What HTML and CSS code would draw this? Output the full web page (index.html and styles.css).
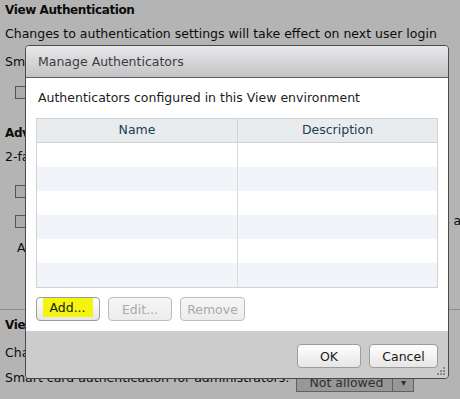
FILE: index.html
```html
<!DOCTYPE html>
<html lang="en">
<head>
    <meta charset="UTF-8">
    <title>Manage Authenticators</title>
    <link rel="stylesheet" href="styles.css">
</head>
<body>
    <div class="page">
        <h2 class="section-title">View Authentication</h2>
        <p class="line line-note">Changes to authentication settings will take effect on next user login</p>
        <p class="line line-field">Smart card authentication for users:</p>
        <div class="check check-first"><span class="box"></span>Disconnect user sessions on smart card removal</div>

        <h2 class="section-title section-adv">Advanced Authentication</h2>
        <p class="line line-twofa">2-factor authentication: RSA SecurID</p>
        <div class="check check-second"><span class="box"></span>Enforce SecurID and Windows user name matching</div>
        <div class="check check-third"><span class="box"></span>Use the same user name and password for both RSA and Windows authentication</div>
        <p class="line line-indent">Authenticators: None configured</p>

        <hr class="divider">

        <h2 class="section-title section-admin">View Administrator Authentication</h2>
        <p class="line line-note-admin">Changes to authentication settings will take effect on next user login</p>
        <div class="select-row">
            <span class="select-label">Smart card authentication for administrators:</span>
            <span class="select">
                <span class="select-value">Not allowed</span>
                <span class="select-arrow">&#9662;</span>
            </span>
        </div>
    </div>

    <!-- modal mask over the page -->
    <div class="mask"></div>

    <div class="dialog">
        <div class="dialog-title">Manage Authenticators</div>
        <div class="dialog-body">
            <p class="dialog-intro">Authenticators configured in this View environment</p>
            <table class="grid">
                <thead>
                    <tr><th class="col-name">Name</th><th class="col-desc">Description</th></tr>
                </thead>
                <tbody>
                    <tr><td></td><td></td></tr>
                    <tr class="alt"><td></td><td></td></tr>
                    <tr><td></td><td></td></tr>
                    <tr class="alt"><td></td><td></td></tr>
                    <tr><td></td><td></td></tr>
                    <tr class="alt"><td></td><td></td></tr>
                </tbody>
            </table>
            <div class="grid-actions">
                <button class="btn btn-add"><span class="marker">Add...</span></button>
                <button class="btn btn-edit" disabled>Edit...</button>
                <button class="btn btn-remove" disabled>Remove</button>
            </div>
        </div>
        <div class="dialog-footer">
            <button class="btn btn-ok">OK</button>
            <button class="btn btn-cancel">Cancel</button>
            <svg class="grip" width="10" height="11" viewBox="0 0 10 11">
                <rect x="7" y="1" width="2" height="2" fill="#8a8a8a"/>
                <rect x="4" y="4" width="2" height="2" fill="#8a8a8a"/>
                <rect x="7" y="4" width="2" height="2" fill="#8a8a8a"/>
                <rect x="1" y="7" width="2" height="2" fill="#8a8a8a"/>
                <rect x="4" y="7" width="2" height="2" fill="#8a8a8a"/>
                <rect x="7" y="7" width="2" height="2" fill="#8a8a8a"/>
            </svg>
        </div>
    </div>
</body>
</html>
```

FILE: styles.css
```css
body {
    margin: 0;
    background-color: #fff;
    font-family: 'DejaVu Sans', sans-serif;
    font-size: 12.5px;
    line-height: 16px;
    color: #111;
    overflow: hidden;
    width: 460px;
    height: 399px;
    position: relative;
}
.page {
    padding: 2px 0 0 5px;
    white-space: nowrap;
    overflow: hidden;
}
.section-title {
    margin: 0;
    font-size: 12px;
    letter-spacing: -0.4px;
    font-weight: bold;
    line-height: 16px;
}
.line {
    margin: 0;
}
.line-note {
    margin-top: 8px;
}
.line-field {
    margin-top: 12px;
}
.check {
    display: flex;
    align-items: center;
    height: 16px;
    padding-left: 10px;
}
.box {
    flex-shrink: 0;
    width: 11px;
    height: 11px;
    border: 1px solid #777;
    background-color: #f4f4f4;
    margin-right: 4px;
}
.check-first {
    margin-top: 14px;
}
.section-adv {
    margin-top: 25px;
}
.line-twofa {
    margin-top: 8px;
}
.check-second {
    margin-top: 18px;
}
.check-third {
    margin-top: 14px;
}
.line-indent {
    margin-top: 11px;
    padding-left: 12px;
}
.divider {
    margin: 53px 0 0 -5px;
    border: none;
    border-top: 1px solid #c8c8c8;
    height: 0;
}
.section-admin {
    margin-top: 7px;
}
.line-note-admin {
    margin-top: 12px;
}
.select-row {
    display: flex;
    align-items: flex-start;
    margin-top: 7px;
}
.select-label {
    padding-top: 2px;
}
.select {
    display: flex;
    height: 22px;
    margin-left: 7px;
    border: 1px solid #8a8a8a;
    background-color: #d6d6d6;
    color: #444;
}
.select-value {
    width: 83px;
    padding: 6px 0 0 12px;
}
.select-arrow {
    width: 20px;
    border-left: 1px solid #8a8a8a;
    text-align: center;
    padding-top: 6px;
    font-size: 10px;
}

.mask {
    position: absolute;
    inset: 0;
    background-color: rgba(0, 0, 0, 0.294);
}

.dialog {
    position: absolute;
    left: 25px;
    top: 45px;
    width: 424px;
    height: 334px;
    box-sizing: border-box;
    border: 1px solid #4a4a4a;
    border-radius: 4px;
    overflow: hidden;
    display: flex;
    flex-direction: column;
    background-color: #ccc;
}
.dialog-title {
    height: 31px;
    border-bottom: 1px solid #5c5c5c;
    background: linear-gradient(#e8e8ea, #c2c3c5);
    color: #3c3c3c;
    padding-left: 12px;
    line-height: 31px;
}
.dialog-body {
    background-color: #fff;
    padding: 12px 9px 10px 10px;
}
.dialog-intro {
    margin: 0 0 12px 2px;
    color: #1c1c1c;
}
.grid {
    width: 402px;
    border-collapse: collapse;
    table-layout: fixed;
    border: 1px solid #d2d2d2;
}
.grid th {
    height: 19px;
    padding: 4px 0 0;
    background-color: #e9ecef;
    border-bottom: 1px solid #d2d2d2;
    font-weight: normal;
    color: #1f3d4a;
    line-height: 14px;
    vertical-align: top;
}
.grid .col-name {
    width: 200px;
    border-right: 1px solid #d2d2d2;
}
.grid td {
    height: 24px;
    padding: 0;
}
.grid td:first-child {
    border-right: 1px solid #dcdcdc;
}
.grid tr.alt td {
    background-color: #f1f4f9;
}
.grid-actions {
    display: flex;
    gap: 8px;
    margin-top: 9px;
}
.btn {
    height: 24px;
    padding: 0;
    border: 1px solid #9c9c9c;
    border-radius: 4px;
    background: linear-gradient(#ffffff, #e6e6e6);
    font-family: 'DejaVu Sans', sans-serif;
    font-size: 12.5px;
    color: #1a1a1a;
}
.btn-add {
    width: 64px;
    position: relative;
}
.marker {
    display: inline-block;
    position: relative;
    top: -2px;
    background-color: #f4f40f;
    padding: 2px 7px 2px 6px;
    line-height: 15px;
}
.btn-edit {
    width: 64px;
}
.btn-remove {
    width: 65px;
}
.btn:disabled {
    border-color: #bdbdbd;
    background: linear-gradient(#f6f6f6, #ececec);
    color: #a9a9a9;
}
.dialog-footer {
    flex: 1;
    position: relative;
    display: flex;
    justify-content: flex-end;
    gap: 8px;
    padding: 13px 10px 0 0;
    background-color: #ccc;
}
.btn-ok {
    width: 64px;
}
.btn-cancel {
    width: 69px;
}
.grip {
    position: absolute;
    right: 2px;
    bottom: 1px;
}
```
